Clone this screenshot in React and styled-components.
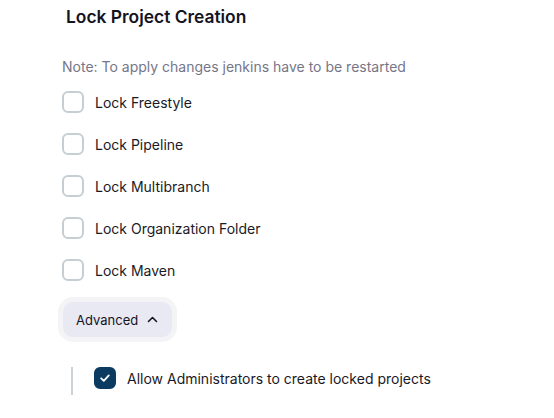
import React from "react";
import styled, { createGlobalStyle } from "styled-components";

const Global = createGlobalStyle`
  html, body { margin: 0; padding: 0; background: #fff; }
  body { font-family: Inter, "Noto Sans", sans-serif; color: #14141f; }
`;

const Page = styled.div`
  padding: 6px 0 0 62px;
`;

const Title = styled.h2`
  margin: 0 0 0 4px;
  font-size: 17.4px;
  font-weight: 600;
  line-height: 21px;
`;

const Note = styled.div`
  margin-top: 31px;
  font-size: 14px;
  line-height: 18px;
  color: #767689;
`;

const List = styled.div`
  display: flex;
  flex-direction: column;
  gap: 20px;
  margin-top: 15px;
`;

const Row = styled.label`
  display: flex;
  align-items: center;
  gap: 11px;
  height: 22px;
  font-size: 14px;
  font-weight: 400;
  color: #1a1a26;
`;

const Box = styled.span`
  box-sizing: border-box;
  width: 22px;
  height: 22px;
  border-radius: 6px;
  border: 2px solid ${(p) => (p.$checked ? "#0b3b60" : "#c5ced3")};
  background: ${(p) => (p.$checked ? "#0b3b60" : "#fff")};
  display: flex;
  align-items: center;
  justify-content: center;
  flex-shrink: 0;
`;

const Advanced = styled.button`
  margin: 21px 0 0 1px;
  display: flex;
  align-items: center;
  gap: 9px;
  height: 35px;
  padding: 0 14px 0 13px;
  border: none;
  border-radius: 10px;
  background: #e9e9f3;
  box-shadow: 0 0 0 5px #f4f4f7;
  font-family: inherit;
  font-size: 13px;
  font-weight: 400;
  color: #14141f;
`;

const Nested = styled.div`
  margin: 30px 0 0 9px;
  padding: 0 0 6px 21px;
  border-left: 2px solid #ccd1d5;
`;

function Checkbox({ checked, children }) {
  return (
    <Row>
      <Box $checked={checked}>
        {checked && (
          <svg width="12" height="12" viewBox="0 0 12 12" fill="none">
            <path d="M2.2 6.3 L4.8 8.8 L9.8 3.4" stroke="#fff" strokeWidth="1.8" strokeLinecap="round" strokeLinejoin="round" />
          </svg>
        )}
      </Box>
      {children}
    </Row>
  );
}

export default function App() {
  return (
    <>
      <Global />
      <Page>
        <Title>Lock Project Creation</Title>
        <Note>Note: To apply changes jenkins have to be restarted</Note>
        <List>
          <Checkbox>Lock Freestyle</Checkbox>
          <Checkbox>Lock Pipeline</Checkbox>
          <Checkbox>Lock Multibranch</Checkbox>
          <Checkbox>Lock Organization Folder</Checkbox>
          <Checkbox>Lock Maven</Checkbox>
        </List>
        <Advanced>
          Advanced
          <svg width="11" height="7" viewBox="0 0 11 7" fill="none">
            <path d="M1.5 5.5 L5.5 1.5 L9.5 5.5" stroke="#14141f" strokeWidth="1.6" strokeLinecap="round" strokeLinejoin="round" />
          </svg>
        </Advanced>
        <Nested>
          <Checkbox checked>Allow Administrators to create locked projects</Checkbox>
        </Nested>
      </Page>
    </>
  );
}
